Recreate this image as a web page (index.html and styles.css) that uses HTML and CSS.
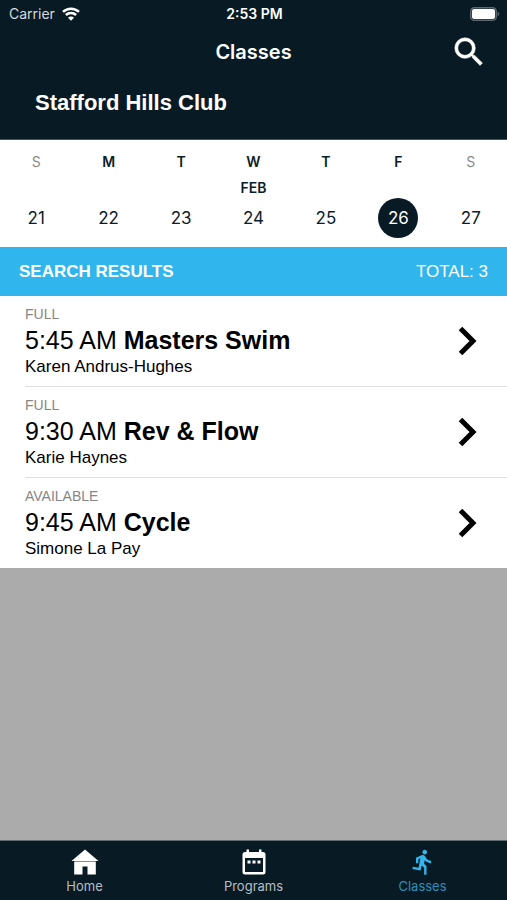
FILE: index.html
```html
<!DOCTYPE html>
<html lang="en">
<head>
<meta charset="utf-8">
<meta name="viewport" content="width=device-width, initial-scale=1">
<title>Classes</title>
<link rel="stylesheet" href="styles.css">
</head>
<body>
<div class="app">
  <header class="header">
    <div class="status">
      <span class="carrier">Carrier
        <svg class="wifi" viewBox="0 0 18 14" aria-hidden="true">
          <path d="M1 4.900a11.500 11.500 0 0 1 16 0M3.900 8a7.300 7.300 0 0 1 10.200 0" fill="none" stroke="currentColor" stroke-width="2.500"/>
          <path d="M9 13.800L6 10.700a4.200 4.200 0 0 1 6 0z" fill="currentColor"/>
        </svg>
      </span>
      <span class="clock">2:53 PM</span>
      <svg class="battery" viewBox="0 0 30 14" aria-hidden="true">
        <rect x=".75" y=".75" width="25.500" height="12.500" rx="3.600" fill="none" stroke="#5d6970" stroke-width="1.500"/>
        <rect x="2" y="2" width="23" height="10" rx="2" fill="#fff"/>
        <path d="M27.600 4.800a2.300 2.300 0 0 1 0 4.400z" fill="#5d6970"/>
      </svg>
    </div>
    <div class="titlebar">
      <h1 class="title">Classes</h1>
      <button class="search" type="button" aria-label="Search">
        <svg viewBox="0 0 24 24" aria-hidden="true"><path fill="currentColor" stroke="currentColor" stroke-width=".3" d="M15.5 14h-.79l-.28-.27A6.471 6.471 0 0 0 16 9.5 6.5 6.5 0 1 0 9.5 16c1.61 0 3.09-.59 4.23-1.57l.27.28v.79l5 4.99L20.49 19l-4.99-5zm-6 0C7.01 14 5 11.99 5 9.5S7.01 5 9.5 5 14 7.01 14 9.5 11.99 14 9.5 14z"/></svg>
      </button>
    </div>
    <h2 class="club">Stafford Hills Club</h2>
  </header>

  <main class="main">
    <div class="week">
      <div class="day weekend"><span class="letter">S</span><span class="month"></span><button type="button" class="date">21</button></div>
      <div class="day"><span class="letter">M</span><span class="month"></span><button type="button" class="date">22</button></div>
      <div class="day"><span class="letter">T</span><span class="month"></span><button type="button" class="date">23</button></div>
      <div class="day"><span class="letter">W</span><span class="month">FEB</span><button type="button" class="date">24</button></div>
      <div class="day"><span class="letter">T</span><span class="month"></span><button type="button" class="date">25</button></div>
      <div class="day"><span class="letter">F</span><span class="month"></span><button type="button" class="date selected">26</button></div>
      <div class="day weekend"><span class="letter">S</span><span class="month"></span><button type="button" class="date">27</button></div>
    </div>

    <div class="results">
      <h3 class="results-title">SEARCH RESULTS</h3>
      <span>TOTAL: 3</span>
    </div>

    <ul class="list">
      <li><a class="class" href="#masters-swim">
        <span class="info"><span class="state">FULL</span><span class="name">5:45 AM <b>Masters Swim</b></span><span class="coach">Karen Andrus-Hughes</span></span>
        <svg class="chevron" viewBox="0 0 20 30" aria-hidden="true"><path d="M2.500 2.500L15 15 2.500 27.500" fill="none" stroke="currentColor" stroke-width="5"/></svg>
      </a></li>
      <li><a class="class" href="#rev-flow">
        <span class="info"><span class="state">FULL</span><span class="name">9:30 AM <b>Rev &amp; Flow</b></span><span class="coach">Karie Haynes</span></span>
        <svg class="chevron" viewBox="0 0 20 30" aria-hidden="true"><path d="M2.500 2.500L15 15 2.500 27.500" fill="none" stroke="currentColor" stroke-width="5"/></svg>
      </a></li>
      <li><a class="class" href="#cycle">
        <span class="info"><span class="state">AVAILABLE</span><span class="name">9:45 AM <b>Cycle</b></span><span class="coach">Simone La Pay</span></span>
        <svg class="chevron" viewBox="0 0 20 30" aria-hidden="true"><path d="M2.500 2.500L15 15 2.500 27.500" fill="none" stroke="currentColor" stroke-width="5"/></svg>
      </a></li>
    </ul>
  </main>

  <nav class="tabs">
    <a class="tab" href="#home">
      <svg viewBox="0 0 28 28" aria-hidden="true"><path fill="currentColor" d="M14 1.500L27.500 13H.5zM3.200 13.600h21.600V26.500h-8.300v-8h-5v8H3.200z"/></svg>
      <span>Home</span>
    </a>
    <a class="tab" href="#programs">
      <svg viewBox="0 0 28 28" aria-hidden="true"><path fill="currentColor" fill-rule="evenodd" d="M6.500 1.500H9V4h10V1.500h2.500V4H23a2.500 2.500 0 0 1 2.500 2.500v17.500A2.500 2.500 0 0 1 23 26.500H5a2.500 2.500 0 0 1-2.500-2.500V6.500A2.500 2.500 0 0 1 5 4h1.500zM5 10v14h18V10zM7.500 12.500h3v3h-3zM12.500 12.500h3v3h-3zM17.500 12.500h3v3h-3z"/></svg>
      <span>Programs</span>
    </a>
    <a class="tab active" href="#classes" aria-current="page">
      <svg viewBox="0 0 24 24" aria-hidden="true"><path fill="currentColor" d="M13.49 5.48c1.1 0 2-.9 2-2s-.9-2-2-2-2 .9-2 2 .9 2 2 2zm-3.600 13.900l1-4.400 2.100 2v6h2v-7.500l-2.100-2 .6-3c1.300 1.500 3.300 2.500 5.500 2.500v-2c-1.900 0-3.500-1-4.300-2.400l-1-1.600c-.4-.6-1-1-1.700-1-.3 0-.5.1-.8.1l-5.200 2.200v4.700h2v-3.400l1.800-.7-1.600 8.100-4.900-1-.4 2 7 1.400z"/></svg>
      <span>Classes</span>
    </a>
  </nav>
</div>
</body>
</html>
```
FILE: styles.css
```css
* {
  box-sizing: border-box;
}

body {
  margin: 0;
  background: #ababab;
  color: #000;
  font-family: Inter, "Liberation Sans", sans-serif;
}

h1, h2, h3, ul {
  margin: 0;
  padding: 0;
}

ul {
  list-style: none;
}

a {
  color: inherit;
  text-decoration: none;
}

button {
  padding: 0;
  border: 0;
  background: none;
  color: inherit;
  font: inherit;
}

svg {
  display: block;
}

.app {
  display: flex;
  flex-direction: column;
  min-height: 100vh;
}

.header {
  background: #081b24;
  color: #fff;
  border-bottom: 1px solid #46545b;
}

.status,
.titlebar {
  display: grid;
  grid-template-columns: 1fr auto 1fr;
  align-items: center;
}

.status {
  height: 27px;
  padding: 0 7px 0 9px;
  font-size: 14px;
}

.carrier {
  display: flex;
  align-items: center;
  gap: 7px;
  color: #d5dadd;
}

.wifi {
  width: 18px;
  height: 14px;
  color: #fff;
}

.clock {
  font-weight: 600;
}

.battery {
  width: 30px;
  height: 14px;
  justify-self: end;
}

.titlebar {
  height: 50px;
  padding: 0 19px;
}

.title {
  grid-column: 2;
  font-size: 20px;
  font-weight: 600;
}

.search {
  justify-self: end;
}

.search svg {
  width: 38px;
  height: 38px;
}

.club {
  padding: 13px 35px 23px;
  font: bold 22px/26px "Liberation Sans", sans-serif;
}

.main {
  flex: 1;
}

.week {
  display: grid;
  grid-template-columns: repeat(7, 1fr);
  padding: 12px 0 9px;
  background: #fff;
  color: #0b1d26;
}

.day {
  display: flex;
  flex-direction: column;
  align-items: center;
}

.letter,
.month {
  height: 20px;
  font-size: 14px;
  line-height: 20px;
  font-weight: 600;
}

.month {
  height: 26px;
  line-height: 32px;
}

.weekend .letter {
  color: #8a8a8a;
  font-weight: 400;
}

.date {
  width: 40px;
  height: 40px;
  border-radius: 50%;
  font-size: 17px;
}

.selected {
  background: #081b24;
  color: #fff;
}

.results {
  display: flex;
  align-items: center;
  justify-content: space-between;
  height: 49px;
  padding: 0 19px;
  background: #30b6ec;
  color: #fff;
  font: 17px "Liberation Sans", sans-serif;
}

.results-title {
  font-size: 17px;
}

.list {
  padding-left: 25px;
  background: #fff;
  font-family: "Liberation Sans", sans-serif;
}

.list li + li {
  border-top: 1px solid #dfdfdf;
}

.class {
  display: flex;
  align-items: center;
  justify-content: space-between;
  padding: 8px 29px 8px 0;
}

.info {
  display: flex;
  flex-direction: column;
}

.state {
  font-size: 14px;
  line-height: 20px;
  color: #868686;
}

.name {
  font-size: 25px;
  line-height: 32px;
}

.coach {
  font-size: 17px;
  line-height: 22px;
}

.chevron {
  width: 20px;
  height: 30px;
}

.tabs {
  display: grid;
  grid-template-columns: repeat(3, 1fr);
  height: 60px;
  border-top: 1px solid #5e6a70;
  background: #081b24;
}

.tab {
  display: flex;
  flex-direction: column;
  align-items: center;
  padding-top: 7px;
  color: #fff;
}

.tab svg {
  width: 28px;
  height: 28px;
}

.tab span {
  font-size: 13px;
  line-height: 20px;
  color: #b5bfc4;
}

.tab.active {
  color: #35b5ea;
}

.tab.active span {
  color: #2b8fbb;
}
```
